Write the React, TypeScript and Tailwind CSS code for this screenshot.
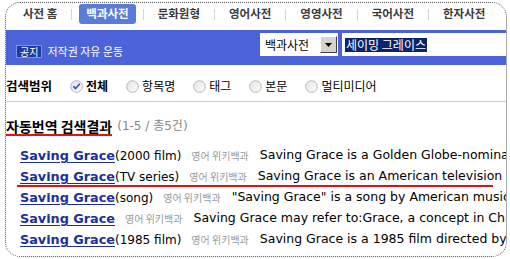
import React from "react";

const tabs = ["사전 홈", "백과사전", "문화원형", "영어사전", "영영사전", "국어사전", "한자사전"];

const scopes = [
  { label: "전체", checked: true },
  { label: "항목명" },
  { label: "태그" },
  { label: "본문" },
  { label: "멀티미디어" },
];

const results = [
  { suffix: "(2000 film)", text: "Saving Grace is a Golden Globe-nominated film" },
  { suffix: "(TV series)", text: "Saving Grace is an American television series", marked: true },
  { suffix: "(song)", text: "\"Saving Grace\" is a song by American musician" },
  { suffix: "", text: "Saving Grace may refer to:Grace, a concept in Christianity" },
  { suffix: "(1985 film)", text: "Saving Grace is a 1985 film directed by Robert" },
];

// little XP style radio button
function Radio({ checked }: { checked?: boolean }) {
  return (
    <svg width="13" height="13" viewBox="0 0 13 13" className="shrink-0">
      <defs>
        <linearGradient id="radioFill" x1="0" y1="0" x2="1" y2="1">
          <stop offset="0" stopColor="#e2e2e2" />
          <stop offset="1" stopColor="#ffffff" />
        </linearGradient>
      </defs>
      <circle cx="6.5" cy="6.5" r="5.8" fill="url(#radioFill)" stroke="#b5b5b5" strokeWidth="1" />
      {checked && (
        <path d="M3.8 6.6 L5.6 8.6 L9.4 4.2" fill="none" stroke="#3350c4" strokeWidth="1.6" strokeLinecap="round" strokeLinejoin="round" />
      )}
    </svg>
  );
}

export default function App() {
  return (
    <div className="w-[510px] h-[259px] bg-white pl-[5px] pt-[2px] pr-[3px] pb-[2px] font-['Noto_Sans_CJK_KR',sans-serif]">
      <div className="h-full border border-dotted border-[#555] rounded-[15px] overflow-hidden">

        {/* tab bar */}
        <div className="h-[27px] pt-[1px] pl-[10px] flex items-start whitespace-nowrap">
          {tabs.map((t, i) => (
            <div key={t} className="flex items-center">
              {i > 0 && <span className="mx-[7px] w-px h-[11px] bg-[#d4d4d4]" />}
              <span
                className={
                  "h-[20px] px-[7px] flex items-center text-[11.5px] font-bold " +
                  (t === "백과사전" ? "bg-[#5b7bd9] text-white rounded-[3px]" : "text-[#3c3c3c]")
                }
              >
                {t}
              </span>
            </div>
          ))}
        </div>

        {/* blue search bar */}
        <div className="h-[35px] bg-[#4b62d8] flex items-start">
          <div className="w-[254px] pl-[10px] pt-[15px] flex items-center gap-[5px]">
            <span className="h-[13px] px-[3px] flex items-center bg-[#1f3b9e] border border-[#7a92ea] text-[10px] leading-none text-white">
              공지
            </span>
            <span className="text-[11px] leading-none text-white">저작권 자유 운동</span>
          </div>
          <div className="mt-[3px] w-[78px] h-[23px] bg-white flex items-center pl-[5px] pr-[1px] justify-between">
            <span className="text-[12px] text-black">백과사전</span>
            <span className="w-[17px] h-[17px] bg-[#d6d3ce] border border-t-white border-l-white border-r-[#404040] border-b-[#404040] flex items-center justify-center">
              <svg width="7" height="4" viewBox="0 0 7 4">
                <path d="M0 0 H7 L3.5 4 Z" fill="#000" />
              </svg>
            </span>
          </div>
          <div className="mt-[3px] ml-[4px] flex-1 h-[23px] bg-white flex items-center pl-[3px]">
            <span className="bg-[#0a246a] text-white text-[12px] leading-[14px] px-[1px]">세이밍 그레이스</span>
          </div>
        </div>

        {/* search scope */}
        <div className="h-[36px] pt-[6px] flex items-center whitespace-nowrap">
          <span className="text-[12.5px] font-bold text-black">검색범위</span>
          <div className="ml-[18px] flex items-center gap-[18px]">
            {scopes.map((s) => (
              <label key={s.label} className="flex items-center gap-[3px]">
                <Radio checked={s.checked} />
                <span className={"text-[12px] text-black " + (s.checked ? "font-bold text-[12.5px]" : "")}>{s.label}</span>
              </label>
            ))}
          </div>
        </div>

        <div className="h-px bg-[#d0d0d0]" />

        {/* results */}
        <div className="pt-[16px] pb-[9px] flex items-end whitespace-nowrap">
          <span className="text-[14px] leading-[16px] font-bold text-black border-b-2 border-[#dd1515]">자동번역 검색결과</span>
          <span className="ml-[5px] text-[12px] leading-[16px] text-[#888] font-['DejaVu_Sans','Noto_Sans_CJK_KR',sans-serif] mb-[2px]">
            (1-5 / 총5건)
          </span>
        </div>

        <div className="font-['DejaVu_Sans','Noto_Sans_CJK_KR',sans-serif]">
          {results.map((r, i) => (
            <div key={i} className="relative h-[21px] pl-[14px] flex items-center whitespace-nowrap overflow-hidden">
              <a href="#" className="text-[12.8px] font-bold text-[#1b2f9f] underline underline-offset-2">
                Saving Grace
              </a>
              {r.suffix && <span className="text-[12px] text-black">{r.suffix}</span>}
              <span className="ml-[10px] mr-[11px] text-[10px] text-[#999] font-['Noto_Sans_CJK_KR',sans-serif]">영어 위키백과</span>
              <span className="text-[12.5px] text-black">{r.text}</span>
              {r.marked && <div className="absolute left-[11px] w-[476px] bottom-[0px] h-[2px] bg-[#e01010]" />}
            </div>
          ))}
        </div>
      </div>
    </div>
  );
}
